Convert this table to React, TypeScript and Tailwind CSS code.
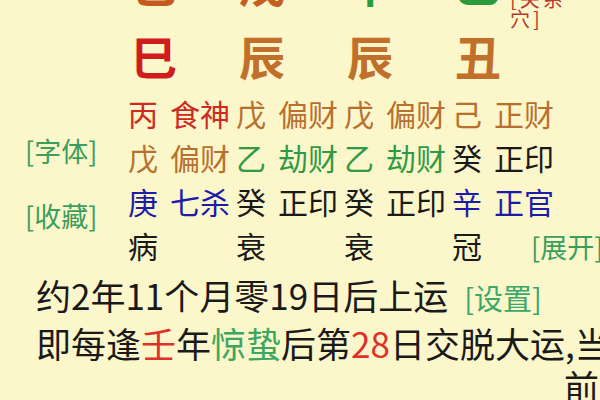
import React from 'react'

type Cell = { stem: string; god: string; color: string }

const RED = 'text-[#cc2a22]'
const BROWN = 'text-[#b8702e]'
const GREEN = 'text-[#2f9a45]'
const BLUE = 'text-[#1c1ca8]'
const BLACK = 'text-[#1a1a1a]'

const hidden: Cell[][] = [
  [
    { stem: '丙', god: '食神', color: RED },
    { stem: '戊', god: '偏财', color: BROWN },
    { stem: '戊', god: '偏财', color: BROWN },
    { stem: '己', god: '正财', color: BROWN },
  ],
  [
    { stem: '戊', god: '偏财', color: BROWN },
    { stem: '乙', god: '劫财', color: GREEN },
    { stem: '乙', god: '劫财', color: GREEN },
    { stem: '癸', god: '正印', color: BLACK },
  ],
  [
    { stem: '庚', god: '七杀', color: BLUE },
    { stem: '癸', god: '正印', color: BLACK },
    { stem: '癸', god: '正印', color: BLACK },
    { stem: '辛', god: '正官', color: BLUE },
  ],
]

const stages = ['病', '衰', '衰', '冠']

function HiddenCell({ cell }: { cell: Cell }) {
  return (
    <div className={`flex w-[108px] shrink-0 ${cell.color}`}>
      <span>{cell.stem}</span>
      <span className="ml-[12px]">{cell.god}</span>
    </div>
  )
}

export default function App() {
  return (
    <div className="relative h-[400px] w-[600px] overflow-hidden bg-[#fcf6cb] font-['Noto_Sans_CJK_SC',sans-serif] text-[#1a1a1a]">
      {/* Heavenly stems (cut off at top) */}
      <div className="-mt-[54px] flex h-[72px] items-center pl-[131px] text-[46px] font-semibold leading-none">
        <span className="w-[108px] shrink-0 text-[#c65a1e]">己</span>
        <span className="w-[108px] shrink-0 text-[#c4601f]">戊</span>
        <span className="w-[108px] shrink-0 text-[#2a9a3a]">甲</span>
        <span className="w-[108px] shrink-0 text-[#2a9a3a]">乙</span>
      </div>
      <div className="absolute left-[510px] top-[-11px] text-[20px] leading-[20px] tracking-[3px] text-[#b8362a]">
        [关系
        <br />
        穴]
      </div>

      {/* Earthly branches */}
      <div className="flex h-[73px] items-center pl-[131px] text-[46px] font-semibold leading-none">
        <span className="w-[108px] shrink-0 text-[#d01c1c]">巳</span>
        <span className="w-[108px] shrink-0 text-[#c0702a]">辰</span>
        <span className="w-[108px] shrink-0 text-[#c0702a]">辰</span>
        <span className="w-[108px] shrink-0 text-[#c0702a]">丑</span>
      </div>

      {/* Hidden stems grid */}
      <div className="flex">
        <div className="w-[128px] shrink-0 pl-[25px] text-[27px] leading-[32px] text-[#3a9e5c]">
          <div className="mt-[44px]">[字体]</div>
          <div className="mt-[33px]">[收藏]</div>
        </div>
        <div className="text-[30px] leading-[44px]">
          {hidden.map((row, i) => (
            <div key={i} className="flex h-[44px]">
              {row.map((cell, j) => (
                <HiddenCell key={j} cell={cell} />
              ))}
            </div>
          ))}
          <div className="flex h-[44px] whitespace-nowrap">
            {stages.map((s, j) => (
              <span key={j} className="w-[108px] shrink-0">
                {s}
                {j === 3 && (
                  <span className="ml-[49px] text-[27px] text-[#3a9e5c]">[展开]</span>
                )}
              </span>
            ))}
          </div>
        </div>
      </div>

      {/* Luck start */}
      <div className="mt-[3px] h-[50px] whitespace-nowrap pl-[36px] text-[35px] leading-[50px]">
        约2年11个月零19日后上运
        <span className="ml-[16px] text-[29px] text-[#3aa868]">[设置]</span>
      </div>
      <div className="h-[46px] whitespace-nowrap pl-[36px] text-[35px] leading-[46px]">
        即每逢<span className="text-[#e0302a]">壬</span>年
        <span className="text-[#3aa860]">惊蛰</span>后第
        <span className="text-[#e0302a]">28</span>日交脱大运,当
      </div>
      <div className="h-[40px] pl-[564px] text-[35px] leading-[40px]">前</div>
    </div>
  )
}
